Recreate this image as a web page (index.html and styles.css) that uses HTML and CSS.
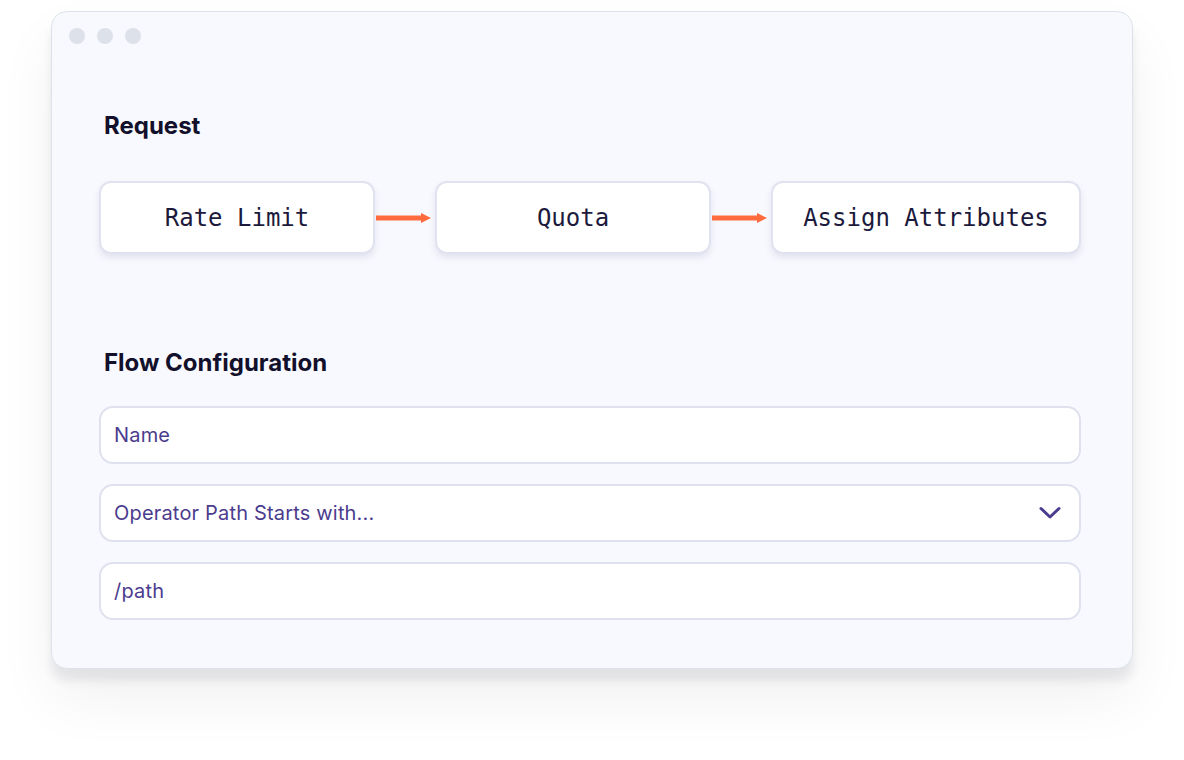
FILE: index.html
```html
<!DOCTYPE html>
<html>
<head>
<meta charset="utf-8">
<link rel="stylesheet" href="styles.css">
</head>
<body>
<div class="window">
  <div class="titlebar">
    <span class="dot"></span><span class="dot"></span><span class="dot"></span>
  </div>
  <div class="content">
    <h2 class="heading request-heading">Request</h2>
    <div class="flow">
      <div class="step step-fixed">Rate Limit</div>
      <div class="arrow">
        <svg width="60" height="14" viewBox="0 0 60 14"><line x1="1" y1="7" x2="48" y2="7" stroke="#ff6b3d" stroke-width="5"/><polygon points="46,2 56,7 46,12" fill="#ff6b3d"/></svg>
      </div>
      <div class="step step-fixed">Quota</div>
      <div class="arrow">
        <svg width="60" height="14" viewBox="0 0 60 14"><line x1="1" y1="7" x2="48" y2="7" stroke="#ff6b3d" stroke-width="5"/><polygon points="46,2 56,7 46,12" fill="#ff6b3d"/></svg>
      </div>
      <div class="step step-grow">Assign Attributes</div>
    </div>
    <h2 class="heading config-heading">Flow Configuration</h2>
    <div class="fields">
      <div class="field">Name</div>
      <div class="field field-select">
        <span>Operator Path Starts with...</span>
        <svg class="chevron" width="22" height="14" viewBox="0 0 22 14"><polyline points="2,2.5 11,11 20,2.5" fill="none" stroke="#4b3c8e" stroke-width="3" stroke-linecap="round" stroke-linejoin="round"/></svg>
      </div>
      <div class="field">/path</div>
    </div>
  </div>
</div>
</body>
</html>
```

FILE: styles.css
```css
html, body {
  margin: 0;
  padding: 0;
  background: #ffffff;
}
body {
  font-family: Inter, "Noto Sans", sans-serif;
  width: 1184px;
  height: 760px;
  overflow: hidden;
}
.window {
  margin: 11px 0 0 51px;
  width: 1082px;
  height: 658px;
  box-sizing: border-box;
  border: 1px solid #dfe1ea;
  border-radius: 16px;
  background: #f8f9fe;
  box-shadow: 0 12px 8px rgba(60, 50, 90, 0.09), 0 30px 60px rgba(0, 0, 0, 0.06);
}
.titlebar {
  display: flex;
  gap: 12px;
  padding: 16px 0 0 17px;
}
.dot {
  width: 16px;
  height: 16px;
  border-radius: 50%;
  background: #dde1ea;
}
.content {
  padding: 0 51px 0 47px;
}
.heading {
  margin: 0 0 0 5px;
  font-size: 24px;
  line-height: 28px;
  font-weight: 700;
  color: #12102b;
}
.request-heading {
  margin-top: 68px;
}
.config-heading {
  margin-top: 95px;
}
.flow {
  display: flex;
  align-items: center;
  margin-top: 41px;
  height: 73px;
}
.step {
  box-sizing: border-box;
  height: 73px;
  display: flex;
  align-items: center;
  justify-content: center;
  background: #ffffff;
  border: 2px solid #e0e3ef;
  border-radius: 12px;
  box-shadow: 0 4px 6px rgba(70, 70, 130, 0.12);
  font-family: "DejaVu Sans Mono", "Liberation Mono", monospace;
  font-size: 24px;
  color: #1c1a3c;
}
.step-fixed {
  flex: 0 0 276px;
}
.step-grow {
  flex: 1 1 auto;
}
.arrow {
  flex: 0 0 60px;
  height: 14px;
  display: flex;
}
.fields {
  margin-top: 29px;
  display: flex;
  flex-direction: column;
  gap: 20px;
}
.field {
  box-sizing: border-box;
  height: 58px;
  display: flex;
  align-items: center;
  justify-content: space-between;
  padding: 0 18px 0 13px;
  background: #ffffff;
  border: 2px solid #dfe2ee;
  border-radius: 14px;
  font-size: 20px;
  letter-spacing: 0.18px;
  color: #4b3c8e;
}
.chevron {
  display: block;
}
```
